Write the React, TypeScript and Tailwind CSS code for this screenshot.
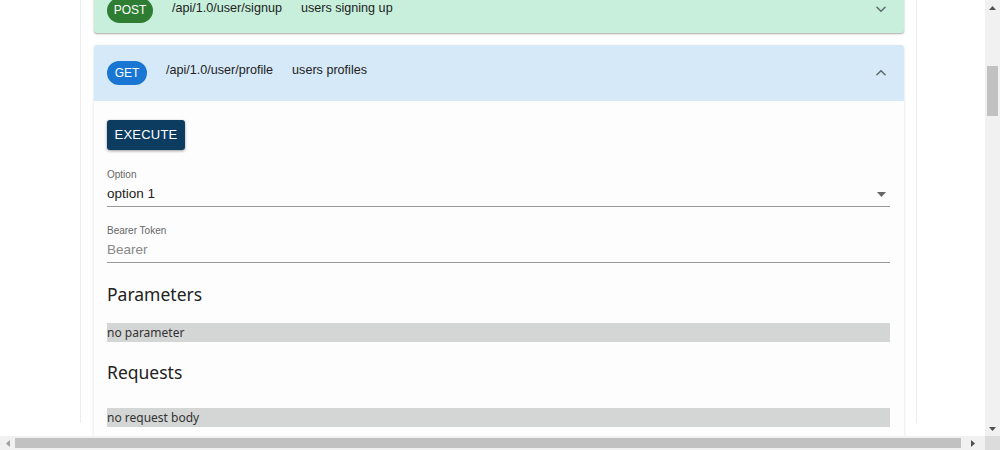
import React from "react";

const sans = { fontFamily: '"Liberation Sans", Arial, sans-serif' };
const noto = { fontFamily: '"Noto Sans", "Open Sans", sans-serif' };

function ChevronDown() {
  return (
    <svg width="14" height="14" viewBox="0 0 24 24" fill="none" stroke="#5f6b6f" strokeWidth="2.6" strokeLinecap="round" strokeLinejoin="round">
      <path d="M5 9l7 7 7-7" />
    </svg>
  );
}
function ChevronUp() {
  return (
    <svg width="14" height="14" viewBox="0 0 24 24" fill="none" stroke="#5f6b6f" strokeWidth="2.6" strokeLinecap="round" strokeLinejoin="round">
      <path d="M5 15l7-7 7 7" />
    </svg>
  );
}

export default function App() {
  return (
    <div className="w-[1000px] h-[450px] overflow-hidden bg-white flex flex-col" style={sans}>
      <div className="flex flex-1 min-h-0">
        <div className="flex-1 overflow-hidden relative">
          <div className="ml-[80px] w-[837px] h-full border-l border-r border-[#ececec] bg-white pl-[13px] pr-[12px]">
            <div className="mt-[-13px] flex flex-col gap-[12px]">
              {/* POST card */}
              <div className="h-[46px] bg-[#c7efdc] rounded-b-[3px] shadow-[0_1px_2px_rgba(0,0,0,0.35)] flex items-center pl-[13px] pr-[16px]">
                <div className="w-[46px] h-[25px] rounded-full bg-[#2e7d32] text-white text-[12px] flex items-center justify-center">POST</div>
                <div className="ml-[19px] text-[12.6px] text-[#222] -mt-[4px]">/api/1.0/user/signup</div>
                <div className="ml-[19px] text-[12.6px] text-[#222] -mt-[4px]">users signing up</div>
                <div className="ml-auto -mt-[2px]"><ChevronDown /></div>
              </div>
              {/* GET card */}
              <div className="bg-[#fdfdfd] shadow-[0_1px_3px_rgba(0,0,0,0.15)] rounded-t-[3px]">
                <div className="h-[56px] bg-[#d6e9f8] flex items-center pl-[13px] pr-[16px] rounded-t-[3px]">
                  <div className="w-[40px] h-[24px] rounded-full bg-[#1976d2] text-white text-[12px] flex items-center justify-center">GET</div>
                  <div className="ml-[19px] text-[12.6px] text-[#222] -mt-[5px]">/api/1.0/user/profile</div>
                  <div className="ml-[19px] text-[12.6px] text-[#222] -mt-[5px]">users profiles</div>
                  <div className="ml-auto"><ChevronUp /></div>
                </div>
                <div className="pl-[13px] pr-[14px] pt-[19px] pb-[10px]">
                  <button className="w-[78px] h-[30px] bg-[#0d3c61] text-white text-[13px] rounded-[3px] shadow-[0_1px_3px_rgba(0,0,0,0.4)] tracking-[0.2px]">EXECUTE</button>
                  <div className="mt-[18px]">
                    <div className="text-[10px] text-[#666] leading-[14px]">Option</div>
                    <div className="h-[25px] border-b border-[#9a9a9a] flex items-center justify-between">
                      <span className="text-[13.5px] text-[#222]">option 1</span>
                      <svg width="9" height="5" viewBox="0 0 9 5" className="mr-[4px]"><path d="M0 0h9L4.5 5z" fill="#666" /></svg>
                    </div>
                  </div>
                  <div className="mt-[17px]">
                    <div className="text-[10px] text-[#666] leading-[14px]">Bearer Token</div>
                    <div className="h-[25px] border-b border-[#9a9a9a] flex items-center">
                      <span className="text-[13.5px] text-[#888]">Bearer</span>
                    </div>
                  </div>
                  <div className="mt-[17px] text-[17.5px] text-[#222] leading-[28px]" style={noto}>Parameters</div>
                  <div className="mt-[15px] h-[19px] bg-[#d3d6d4] text-[12px] text-[#333] flex items-center" style={noto}>no parameter</div>
                  <div className="mt-[16px] text-[17.5px] text-[#222] leading-[28px]" style={noto}>Requests</div>
                  <div className="mt-[22px] h-[19px] bg-[#d3d6d4] text-[12px] text-[#333] flex items-center" style={noto}>no request body</div>
                </div>
              </div>
            </div>
          </div>
        </div>
        {/* vertical scrollbar */}
        <div className="w-[15px] bg-[#f1f1f1] flex flex-col items-center">
          <div className="h-[15px] flex items-center justify-center">
            <svg width="7" height="4" viewBox="0 0 7 4"><path d="M0 4L3.5 0L7 4z" fill="#505050" /></svg>
          </div>
          <div className="mt-[51px] w-[11px] h-[50px] bg-[#c1c1c1]" />
          <div className="flex-1" />
          <div className="h-[15px] flex items-center justify-center">
            <svg width="7" height="4" viewBox="0 0 7 4"><path d="M0 0L3.5 4L7 0z" fill="#505050" /></svg>
          </div>
        </div>
      </div>
      {/* horizontal scrollbar */}
      <div className="h-[14px] bg-[#f1f1f1] flex items-center">
        <div className="w-[15px] flex items-center justify-center">
          <svg width="4" height="7" viewBox="0 0 4 7"><path d="M4 0L0 3.5L4 7z" fill="#a0a0a0" /></svg>
        </div>
        <div className="w-[946px] h-[10px] bg-[#c1c1c1]" />
        <div className="flex-1 flex items-center justify-center">
          <svg width="4" height="7" viewBox="0 0 4 7"><path d="M0 0L4 3.5L0 7z" fill="#505050" /></svg>
        </div>
        <div className="w-[15px] h-full bg-[#dcdcdc]" />
      </div>
    </div>
  );
}
